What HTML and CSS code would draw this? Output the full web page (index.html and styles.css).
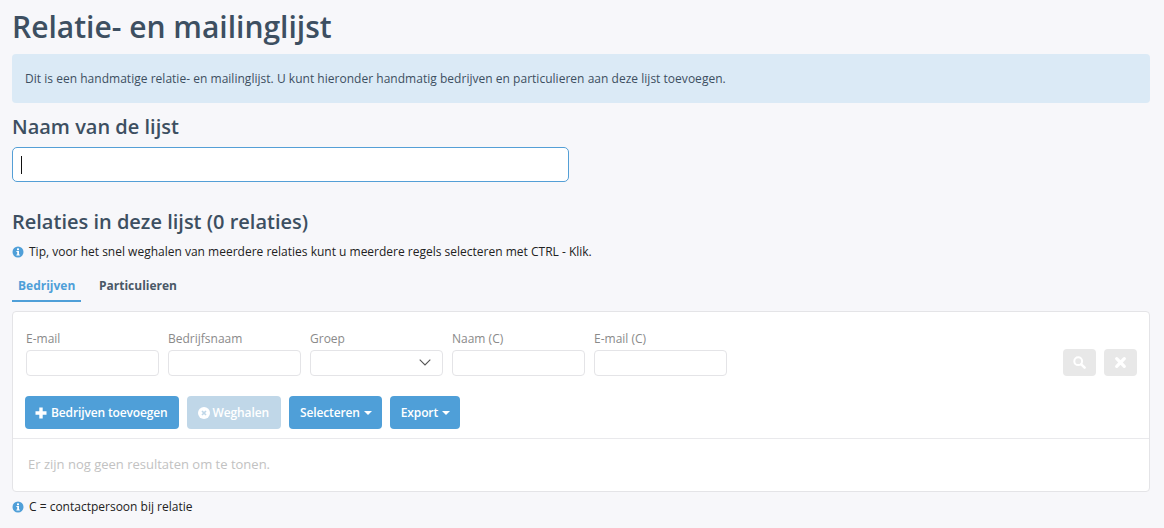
FILE: index.html
```html
<!DOCTYPE html>
<html lang="nl">
<head>
<meta charset="utf-8">
<title>Relatie- en mailinglijst</title>
<link rel="stylesheet" href="styles.css">
</head>
<body>
<h1 class="title">Relatie- en mailinglijst</h1>
<div class="alert">Dit is een handmatige relatie- en mailinglijst. U kunt hieronder handmatig bedrijven en particulieren aan deze lijst toevoegen.</div>
<h2 class="name-label">Naam van de lijst</h2>
<div class="name-input"><span class="caret"></span></div>
<h2 class="section">Relaties in deze lijst (0 relaties)</h2>
<p class="hint tip"><svg class="info" viewBox="0 0 12 12"><circle cx="6" cy="6" r="5.5" fill="#4f9fd8"/><rect x="5" y="2.4" width="2" height="1.8" fill="#fff"/><path d="M4.4 5h2.6v3.4h.8v1H4.400v-1h.8V6h-.8z" fill="#fff"/></svg>Tip, voor het snel weghalen van meerdere relaties kunt u meerdere regels selecteren met CTRL - Klik.</p>
<div class="tabs">
  <span class="tab active">Bedrijven</span>
  <span class="tab">Particulieren</span>
</div>
<div class="card">
  <div class="filters">
    <div class="field"><label>E-mail</label><div class="box"></div></div>
    <div class="field"><label>Bedrijfsnaam</label><div class="box"></div></div>
    <div class="field"><label>Groep</label><div class="box select"><svg class="chev" viewBox="0 0 12 7"><path d="M.7.7 6 6l5.3-5.3" fill="none" stroke="#555" stroke-width="1.1"/></svg></div></div>
    <div class="field"><label>Naam (C)</label><div class="box"></div></div>
    <div class="field"><label>E-mail (C)</label><div class="box"></div></div>
    <div class="filter-actions">
      <span class="mini"><svg viewBox="0 0 13 13" class="mini-icon"><circle cx="5.2" cy="5.2" r="3.9" fill="none" stroke="#fff" stroke-width="2"/><path d="M8.300 8.300 11.600 11.600" stroke="#fff" stroke-width="2.500" stroke-linecap="round"/></svg></span>
      <span class="mini"><svg viewBox="0 0 12 12" class="mini-icon"><path d="M2.500 2.500l7 7M9.500 2.500l-7 7" stroke="#fff" stroke-width="3" stroke-linecap="round"/></svg></span>
    </div>
  </div>
  <div class="toolbar">
    <button class="btn add"><svg class="btn-icon" viewBox="0 0 12 12"><path d="M4.300 .5h3.400v3.800h3.800v3.400H7.700v3.800H4.300V7.700H.5V4.300h3.800z" fill="#fff"/></svg>Bedrijven toevoegen</button>
    <button class="btn off"><svg class="btn-icon" viewBox="0 0 12 12"><circle cx="6" cy="6" r="6" fill="#fff"/><path d="M4 4l4 4M8 4l-4 4" stroke="#c0d7e8" stroke-width="1.700"/></svg>Weghalen</button>
    <button class="btn drop">Selecteren<span class="arrow"></span></button>
    <button class="btn drop">Export<span class="arrow"></span></button>
  </div>
  <div class="empty">Er zijn nog geen resultaten om te tonen.</div>
</div>
<p class="hint foot"><svg class="info" viewBox="0 0 12 12"><circle cx="6" cy="6" r="5.500" fill="#4f9fd8"/><rect x="5" y="2.400" width="2" height="1.800" fill="#fff"/><path d="M4.400 5h2.600v3.400h.8v1H4.400v-1h.8V6h-.8z" fill="#fff"/></svg>C = contactpersoon bij relatie</p>
</body>
</html>
```
FILE: styles.css
```css
* { box-sizing: border-box; }
html, body { height: 100%; }
body {
  margin: 0;
  padding: 0 14px 0 12px;
  background: #f7f7fa;
  font-family: "Open Sans", "Liberation Sans", sans-serif;
  font-size: 12px;
  color: #222;
  overflow: hidden;
}
.title {
  margin: 0;
  padding-top: 7px;
  height: 54px;
  font-size: 30px;
  line-height: 40px;
  font-weight: 600;
  color: #3d4f61;
}
.alert {
  height: 49px;
  padding: 1px 13px 0;
  line-height: 48px;
  background: #dbeaf6;
  border-radius: 4px;
  font-size: 12px;
  letter-spacing: 0.023px;
  color: #3d4f61;
}
.name-label {
  margin: 0;
  padding-top: 10px;
  height: 44px;
  font-size: 20px;
  line-height: 27px;
  font-weight: 600;
  color: #3d4f61;
}
.name-input {
  width: 557px;
  height: 35px;
  background: #fff;
  border: 1px solid #549fd6;
  border-radius: 5px;
  display: flex;
  align-items: center;
  padding-left: 8px;
}
.caret { width: 1px; height: 18px; background: #111; }
.section {
  margin: 0;
  padding-top: 26px;
  height: 60px;
  font-size: 20px;
  line-height: 27px;
  font-weight: 600;
  color: #3d4f61;
}
.hint {
  margin: 0;
  display: flex;
  align-items: center;
  font-size: 12px;
  line-height: 16px;
  color: #222;
}
.tip { height: 20px; }
.info { width: 12px; height: 12px; margin-right: 5px; flex: none; }
.tabs {
  display: flex;
  gap: 7px;
  margin-top: 9px;
  height: 31px;
}
.tab {
  padding: 6px 6px 0;
  font-size: 12px;
  font-weight: 700;
  line-height: 17px;
  color: #4a5866;
}
.tab.active {
  color: #4f9fd8;
  border-bottom: 2px solid #4f9fd8;
  width: 69px;
}
.tabs .tab:last-child { padding-left: 11px; }
.card {
  margin-top: 9px;
  height: 181px;
  background: #fff;
  border: 1px solid #e4e4e7;
  border-radius: 4px;
  display: flex;
  flex-direction: column;
}
.filters {
  display: flex;
  align-items: flex-end;
  gap: 9px;
  padding: 17px 12px 0 13px;
  height: 64px;
}
.field { width: 133px; display: flex; flex-direction: column; }
.field label {
  font-size: 12px;
  line-height: 16px;
  color: #8a8a8a;
  margin-bottom: 3px;
}
.box {
  height: 26px;
  background: #fff;
  border: 1px solid #e4e4e7;
  border-radius: 4px;
  position: relative;
}
.chev { position: absolute; right: 11px; top: 8px; width: 12px; height: 7px; }
.filter-actions { margin-left: auto; display: flex; gap: 8px; }
.mini {
  width: 33px;
  height: 27px;
  background: #e8e8e8;
  border-radius: 4px;
  display: flex;
  align-items: center;
  justify-content: center;
}
.mini-icon { width: 13px; height: 13px; }
.toolbar {
  display: flex;
  gap: 8px;
  padding: 20px 12px 0;
  height: 62px;
}
.btn {
  height: 33px;
  border: 0;
  border-radius: 4px;
  padding: 0 11px;
  background: #4f9fd8;
  color: #fff;
  font: 600 12px/33px "Open Sans", "Liberation Sans", sans-serif;
  letter-spacing: -0.13px;
  display: flex;
  align-items: center;
}
.btn.add { padding-left: 10px; }
.btn.off { background: #c0d7e8; padding-right: 12px; }
.btn.drop { padding-right: 10px; }
.btn-icon { width: 12px; height: 12px; margin-right: 3px; }
.add .btn-icon { margin-right: 4px; }
.arrow {
  margin-left: 4px;
  width: 0;
  height: 0;
  border-left: 4px solid transparent;
  border-right: 4px solid transparent;
  border-top: 4px solid #fff;
}
.empty {
  flex: 1;
  border-top: 1px solid #e9e9ec;
  padding: 0 15px;
  font-size: 13px;
  line-height: 51px;
  color: #c2c2c2;
}
.foot { margin-top: 6px; height: 18px; }
```
